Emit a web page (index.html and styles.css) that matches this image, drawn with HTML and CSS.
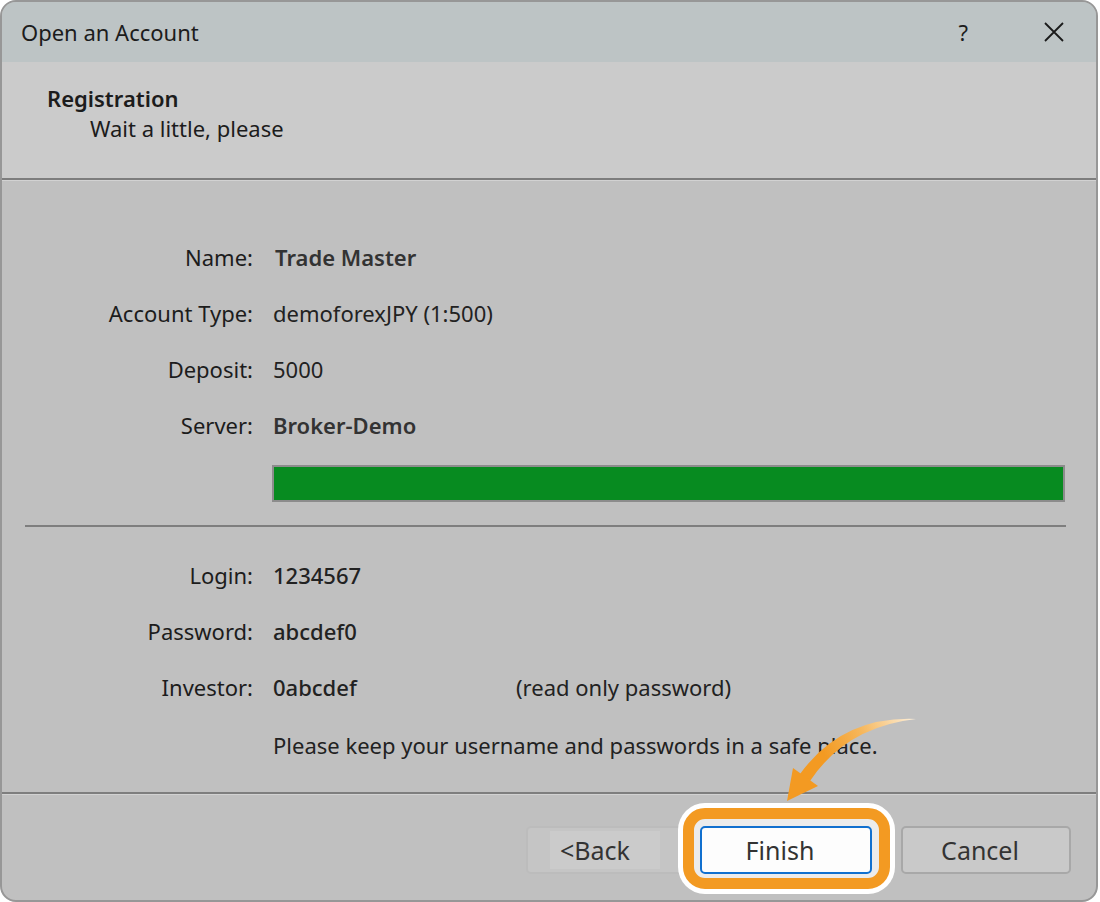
FILE: index.html
```html
<!DOCTYPE html>
<html>
<head lang="en">
    <meta charset="UTF-8">
    <title>Open an Account</title>
    <link rel="stylesheet" href="styles.css">
</head>
<body>
<div class="window">
    <div class="titlebar">
        <span class="title">Open an Account</span>
        <span class="help">?</span>
        <svg class="close" width="20" height="20" viewBox="0 0 20 20">
            <path d="M1 1 L19 19 M19 1 L1 19" stroke="#1a1a1a" stroke-width="1.8" fill="none"/>
        </svg>
    </div>
    <div class="header">
        <div class="header-title">Registration</div>
        <div class="header-sub">Wait a little, please</div>
    </div>
    <div class="content">
        <div class="fields">
            <div class="label">Name:</div>
            <div class="value strong shift">Trade Master</div>
            <div class="label">Account Type:</div>
            <div class="value">demoforexJPY (1:500)</div>
            <div class="label">Deposit:</div>
            <div class="value">5000</div>
            <div class="label">Server:</div>
            <div class="value strong">Broker-Demo</div>
        </div>
        <div class="progress"><div class="progress-fill"></div></div>
        <div class="divider"></div>
        <div class="fields">
            <div class="label">Login:</div>
            <div class="value medium">1234567</div>
            <div class="label">Password:</div>
            <div class="value medium">abcdef0</div>
            <div class="label">Investor:</div>
            <div class="value"><span class="investor medium">0abcdef</span><span>(read only password)</span></div>
            <div class="label"></div>
            <div class="value note">Please keep your username and passwords in a safe place.</div>
        </div>
    </div>
    <div class="footer">
        <button class="btn back" disabled><span>&lt;Back</span></button>
        <div class="finish-wrap">
            <span class="highlight"></span>
            <button class="btn finish">Finish</button>
        </div>
        <button class="btn cancel">Cancel</button>
    </div>
    <svg class="arrow" width="1100" height="902" viewBox="0 0 1100 902">
        <defs>
            <linearGradient id="arrowFade" gradientUnits="userSpaceOnUse" x1="916" y1="719" x2="830" y2="765">
                <stop offset="0" stop-color="#fdf0dc"/>
                <stop offset="0.55" stop-color="#f6b75c"/>
                <stop offset="1" stop-color="#f39a22"/>
            </linearGradient>
        </defs>
        <path d="M916 719 Q846 727 810 781 L800 774 Q842 716 916 719 Z" fill="url(#arrowFade)"/>
        <path d="M787 801 L793 768 L818 786 Z" fill="#f39a22"/>
    </svg>
</div>
</body>
</html>
```

FILE: styles.css
```css
*{
    margin: 0;
    padding: 0;
    box-sizing: border-box;
}
body{
    background: #fff;
    font-family: "Noto Sans", "Open Sans", sans-serif;
    color: #1c1c1c;
}
.window{
    width: 1098px;
    height: 902px;
    border: 2px solid #979797;
    border-radius: 16px;
    overflow: hidden;
    position: relative;
    background: #c0c0c0;
}
.titlebar{
    height: 60px;
    background: #bdc4c5;
    display: flex;
    align-items: center;
    padding-left: 19px;
    font-size: 22px;
}
.title{
    flex: 1;
}
.help{
    margin-right: 76px;
}
.close{
    margin-right: 32px;
}
.header{
    height: 118px;
    background: #cbcbcb;
    border-bottom: 2px solid #7d7d7d;
    padding: 21px 0 0 45px;
    font-size: 22px;
    line-height: 30px;
}
.header-title{
    font-weight: 600;
}
.header-sub{
    padding-left: 43px;
}
.content{
    height: 612px;
    padding-top: 49px;
    box-shadow: inset 0 1px #d2d2d2;
}
.fields{
    display: grid;
    grid-template-columns: 251px 1fr;
    grid-auto-rows: 56px;
    column-gap: 20px;
    align-items: center;
    font-size: 22px;
}
.label{
    text-align: right;
}
.value{
    color: #222;
}
.strong{
    font-weight: 600;
    color: #333;
}
.shift{
    padding-left: 2px;
}
.medium{
    font-weight: 500;
}
.investor{
    display: inline-block;
    width: 243px;
}
.note{
    position: relative;
    top: 2px;
}
.progress{
    width: 793px;
    height: 37px;
    margin: 12px 0 0 270px;
    border: 2px solid #8c8c8c;
    background: #c0c0c0;
}
.progress-fill{
    height: 100%;
    background: #078b20;
}
.divider{
    width: 1041px;
    height: 2px;
    margin: 23px 0 20px 23px;
    background: #7e7e7e;
}
.footer{
    height: 108px;
    border-top: 2px solid #7e7e7e;
    box-shadow: inset 0 1px #d2d2d2;
    display: flex;
    justify-content: flex-end;
    align-items: flex-start;
    padding: 32px 25px 0 0;
}
.btn{
    height: 48px;
    width: 170px;
    padding-right: 12px;
    font-family: "Noto Sans", "Open Sans", sans-serif;
    font-size: 25px;
    color: #333;
    background: #c9c9c9;
    border: 2px solid #a8a8a8;
    border-radius: 5px;
}
.back{
    margin-right: 4px;
    padding: 0 0 0 22px;
    text-align: left;
    background: #c5c5c5;
    border-color: #bcbcbc;
}
.back span{
    display: inline-block;
    padding: 2px 30px 2px 10px;
    background: #cbcbcb;
}
.finish-wrap{
    position: relative;
    margin-right: 29px;
}
.finish{
    position: relative;
    width: 172px;
    background: #fdfdfd;
    border-color: #1170cf;
}
.highlight{
    position: absolute;
    left: -17px;
    top: -18px;
    width: 207px;
    height: 81px;
    border: 11px solid #f39a22;
    border-radius: 22px;
    background: #ececec;
    box-shadow: 0 0 0 5px #fff;
}
.arrow{
    position: absolute;
    left: -2px;
    top: -2px;
    pointer-events: none;
}
```
